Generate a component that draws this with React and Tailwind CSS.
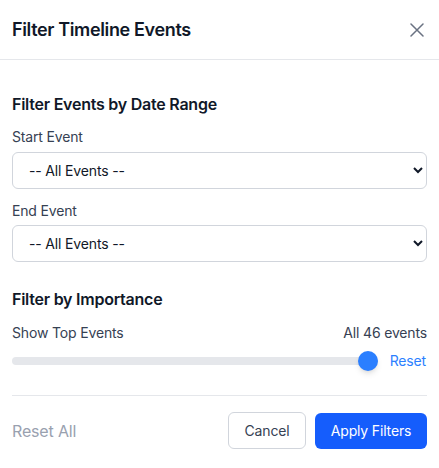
import React from 'react';

const App = () => {

    return (
        <div className="w-[439px] h-[468px] bg-white text-gray-900 tracking-[-0.01em]" style={{ fontFamily: 'Inter, "Liberation Sans", sans-serif' }}>
            <div className="h-[60px] px-3 flex items-center justify-between border-b border-gray-200">
                <h2 className="text-lg font-semibold text-gray-900 tracking-[-0.02em]">Filter Timeline Events</h2>
                <button className="text-gray-500 mr-[3px]">
                    <svg width="14" height="14" viewBox="0 0 14 14" fill="none" stroke="currentColor" strokeWidth="1.5" strokeLinecap="round">
                        <path d="M1 1L13 13M13 1L1 13" />
                    </svg>
                </button>
            </div>

            <div className="px-3 pt-8">
                <h3 className="text-base font-semibold text-gray-900 leading-6 tracking-[-0.015em]">Filter Events by Date Range</h3>

                <div className="mt-[11px]">
                    <label className="block text-sm text-gray-700 leading-5">Start Event</label>
                    <select className="mt-[5px] block w-full h-[37px] px-3 text-sm text-gray-900 border border-gray-300 rounded-md bg-white">
                        <option>-- All Events --</option>
                    </select>
                </div>

                <div className="mt-[12px]">
                    <label className="block text-sm text-gray-700 leading-5">End Event</label>
                    <select className="mt-[4px] block w-full h-[37px] px-3 text-sm text-gray-900 border border-gray-300 rounded-md bg-white">
                        <option>-- All Events --</option>
                    </select>
                </div>

                <h3 className="mt-[25px] text-base font-semibold text-gray-900 leading-6 tracking-[-0.015em]">Filter by Importance</h3>

                <div className="mt-[12px] flex items-center justify-between text-sm text-gray-700 leading-5">
                    <span>Show Top Events</span>
                    <span>All 46 events</span>
                </div>

                <div className="mt-[8px] flex items-center gap-3 h-5">
                    <div className="relative flex-1 h-2 bg-gray-200 rounded-full">
                        <div className="absolute right-0 top-1/2 -translate-y-1/2 w-5 h-5 rounded-full bg-blue-500 shadow-md"></div>
                    </div>
                    <button className="text-sm text-blue-500 mr-px">Reset</button>
                </div>

                <div className="mt-[24px] border-t border-gray-200"></div>

                <div className="pt-[16px] flex items-center justify-between">
                    <button className="text-base text-gray-400">Reset All</button>
                    <div className="flex items-center gap-[9px]">
                        <button className="h-[37px] w-[78px] text-sm text-gray-700 border border-gray-300 rounded-md bg-white">Cancel</button>
                        <button className="h-[36px] w-[112px] text-sm text-white bg-blue-600 rounded-md">Apply Filters</button>
                    </div>
                </div>
            </div>
        </div>
    );
}

export default App;
